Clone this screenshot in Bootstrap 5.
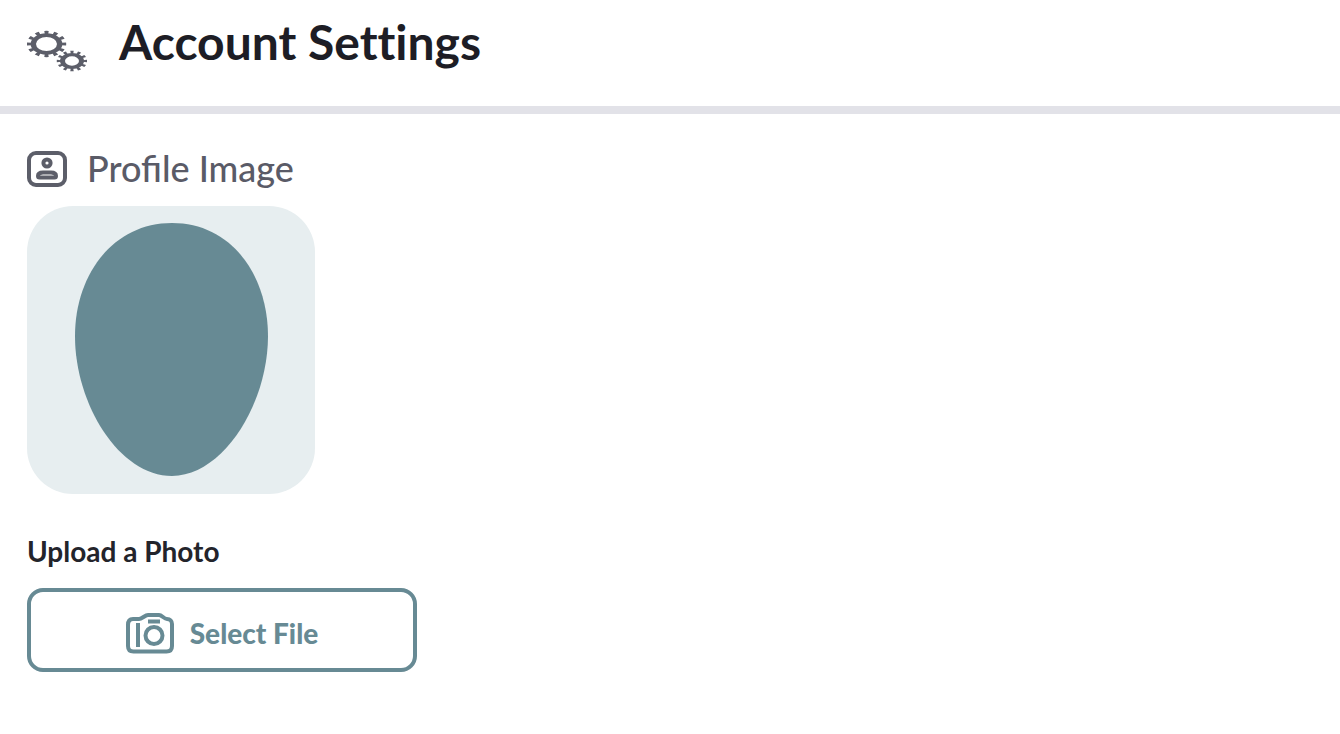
<!DOCTYPE html>
<html lang="en">
<head>
<meta charset="utf-8">
<meta name="viewport" content="width=device-width, initial-scale=1">
<title>Account Settings</title>
<link href="https://cdn.jsdelivr.net/npm/bootstrap@5.3.0/dist/css/bootstrap.min.css" rel="stylesheet">
<style>
  body { font-family: Lato, sans-serif; color: #1f2027; background: #fff; }
  .page-head { padding: 12px 27px 32px; border-bottom: 8px solid #e2e2e8; }
  .page-head svg { margin-top: 16px; }
  .page-title { font-size: 48px; line-height: 60px; font-weight: 700; font-variant-ligatures: none; color: #1d1d25; }
  .section-title { font-size: 36px; line-height: 42px; font-weight: 500; color: #5a5b67; }
  .page-main { padding: 33px 27px; }
  .section-head { gap: 20px; margin-bottom: 17px; }
  .upload-label { font-size: 28px; line-height: 38px; font-weight: 700; color: #23242b; }
  .upload-field { margin-top: 38px; }
  .btn-file {
    --bs-btn-color: #678a94; --bs-btn-border-color: #678a94;
    --bs-btn-hover-color: #fff; --bs-btn-hover-bg: #678a94; --bs-btn-hover-border-color: #678a94;
    width: 390px; height: 84px; margin-top: 18px; padding: 12px 12px 6px;
    border-width: 4px; border-radius: 16px;
    font-size: 28px; line-height: 40px; font-weight: 900; gap: 16px;
  }
</style>
</head>
<body>
<header class="page-head d-flex align-items-start">
  <svg class="flex-shrink-0" width="60" height="46" viewBox="0 0 60 46" fill="none" stroke="#5c5e69" aria-hidden="true">
    <g transform="translate(19.5 16) scale(1 .67)">
      <circle r="13.200" stroke-width="5.400"/>
      <circle r="17.400" stroke-width="4.600" pathLength="24" stroke-dasharray=".9 1.1" stroke-dashoffset=".45"/>
    </g>
    <g transform="translate(45 33) scale(1 .67)">
      <circle r="9.500" stroke-width="5"/>
      <circle r="13" stroke-width="4.500" pathLength="24" stroke-dasharray=".9 1.1" stroke-dashoffset=".45"/>
    </g>
  </svg>
  <h1 class="page-title mb-0 ms-4 ps-2">Account Settings</h1>
</header>
<main class="page-main">
  <section>
    <div class="section-head d-flex align-items-start">
      <svg class="flex-shrink-0 mt-1" width="40" height="36" viewBox="0 0 40 36" fill="none" stroke="#5c5e69" aria-hidden="true">
        <rect x="2" y="2" width="36" height="32" rx="7" stroke-width="4"/>
        <ellipse cx="20" cy="12" rx="3.600" ry="3.600" stroke-width="4"/>
        <path d="M11 25c0-3 2.500-3.500 5-3.500h8c2.500 0 5 .5 5 3.500 0 1-.5 1.500-1.500 1.500h-15c-1 0-1.500-.5-1.500-1.500z" stroke-width="4"/>
      </svg>
      <h2 class="section-title mb-0">Profile Image</h2>
    </div>
    <svg class="d-block" width="288" height="288" viewBox="0 0 288 288" role="img" aria-label="Profile image">
      <rect width="288" height="288" rx="46" fill="#e7eef0"/>
      <path d="M145 17C205 17 241 70 241 130C241 198 196 270 145 270C92 270 48 198 48 130C48 70 85 17 145 17Z" fill="#678a94"/>
    </svg>
    <div class="upload-field d-flex flex-column align-items-start">
      <label class="upload-label" for="select-file">Upload a Photo</label>
      <button type="button" id="select-file" class="btn btn-file mw-100 d-flex align-items-center justify-content-center">
        <svg width="48" height="41" viewBox="0 0 48 41" fill="none" stroke="currentColor" stroke-width="4" aria-hidden="true">
          <path d="M7 6h6c3 0 6-4 9-4h11c3 0 5 4 8 4 3 0 5 2 5 5v22c0 4-2 5.500-5.500 5.500h-33C4 38.500 2 37 2 33V12c0-4 1.500-6 5-6z"/>
          <path d="M12 10v24M22 8.500h12"/>
          <circle cx="28" cy="22.500" r="8.500"/>
        </svg>
        <span>Select File</span>
      </button>
    </div>
  </section>
</main>
<script src="https://cdn.jsdelivr.net/npm/bootstrap@5.3.0/dist/js/bootstrap.bundle.min.js"></script>
</body>
</html>
